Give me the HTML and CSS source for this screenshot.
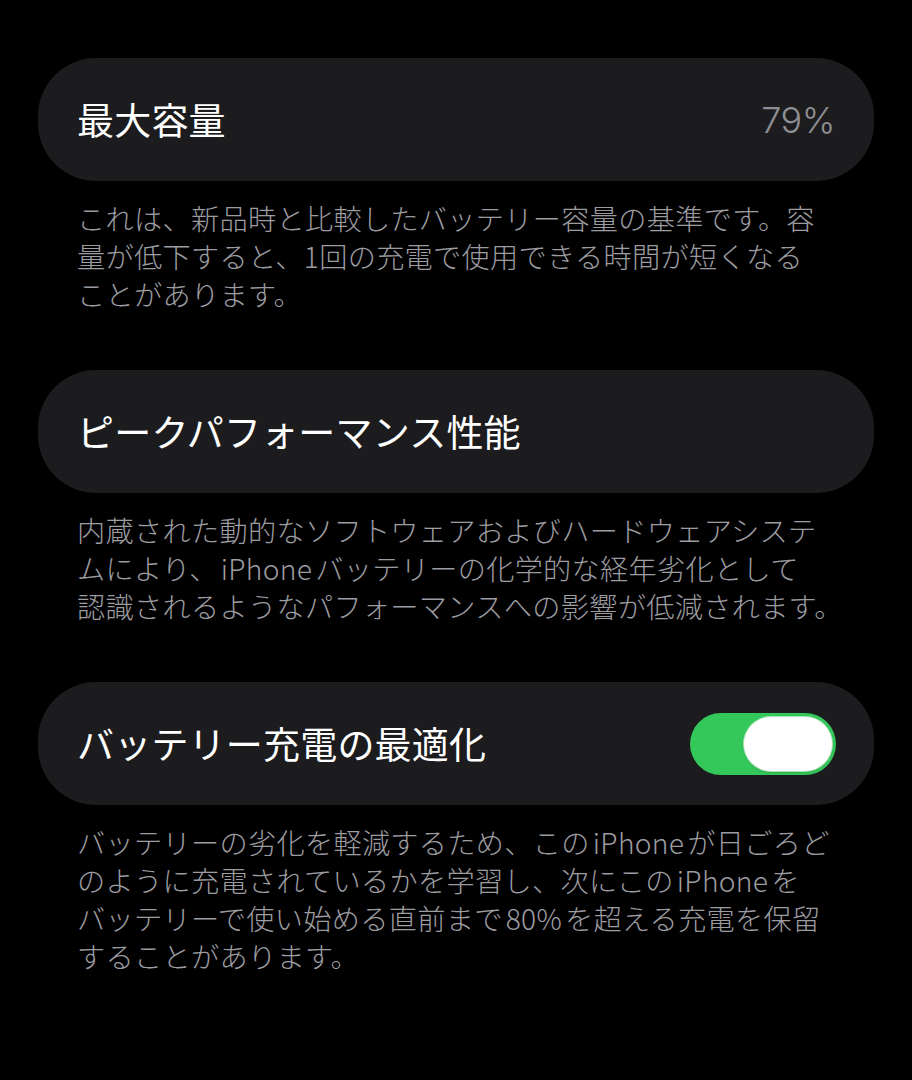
FILE: index.html
```html
<!DOCTYPE html>
<html lang="ja">
<head>
<meta charset="utf-8">
<link rel="stylesheet" href="styles.css">
</head>
<body>
<main class="page">
  <section class="group">
    <div class="card">
      <span class="title">最大容量</span>
      <span class="value">79%</span>
    </div>
    <p class="note">これは、新品時と比較したバッテリー容量の基準です。容<br>量が低下すると、1回の充電で使用できる時間が短くなる<br>ことがあります。</p>
  </section>
  <section class="group">
    <div class="card">
      <span class="title">ピークパフォーマンス性能</span>
    </div>
    <p class="note">内蔵された動的なソフトウェアおよびハードウェアシステ<br>ムにより、<span class="latin">iPhone</span>バッテリーの化学的な経年劣化として<br>認識されるようなパフォーマンスへの影響が低減されます。</p>
  </section>
  <section class="group">
    <div class="card">
      <span class="title">バッテリー充電の最適化</span>
      <span class="toggle"><span class="knob"></span></span>
    </div>
    <p class="note">バッテリーの劣化を軽減するため、この<span class="latin">iPhone</span>が日ごろど<br>のように充電されているかを学習し、次にこの<span class="latin">iPhone</span>を<br>バッテリーで使い始める直前まで<span class="latin">80%</span>を超える充電を保留<br>することがあります。</p>
  </section>
</main>
</body>
</html>
```

FILE: styles.css
```css
html, body {
  margin: 0;
  padding: 0;
  background: #000;
}
body {
  font-family: "Noto Sans CJK JP", "Noto Sans", sans-serif;
  color: #fff;
}
.page {
  padding: 58px 38px 0 38px;
  display: flex;
  flex-direction: column;
  gap: 57px;
}
.group {
  display: flex;
  flex-direction: column;
}
.card {
  height: 123px;
  background: #1c1c1e;
  border-radius: 58px;
  display: flex;
  align-items: center;
  justify-content: space-between;
  padding: 0 38px 0 39px;
  box-sizing: border-box;
}
.title {
  font-size: 37px;
  line-height: 1;
  color: #fff;
  letter-spacing: 0.2px;
}
.value {
  font-family: "Inter", "Noto Sans", sans-serif;
  font-size: 36px;
  font-weight: 300;
  color: #8e8e93;
  letter-spacing: -0.5px;
  margin-right: 1px;
}
.toggle {
  width: 146px;
  height: 62px;
  border-radius: 31px;
  background: #34c759;
  display: flex;
  align-items: center;
  justify-content: flex-end;
  padding: 0 4px;
  box-sizing: border-box;
}
.knob {
  width: 88px;
  height: 54px;
  border-radius: 27px;
  background: #fff;
  box-shadow: 0 0 0 1px rgba(255,255,255,0.6), 0 1px 3px rgba(0,0,0,0.2);
}
.note {
  margin: 18px 0 0 0;
  padding-left: 39px;
  font-size: 28.2px;
  font-weight: 300;
  line-height: 38px;
  letter-spacing: 0.3px;
  color: #9c9ca1;
  white-space: nowrap;
}
.latin {
  margin: 0 3px;
}
```
